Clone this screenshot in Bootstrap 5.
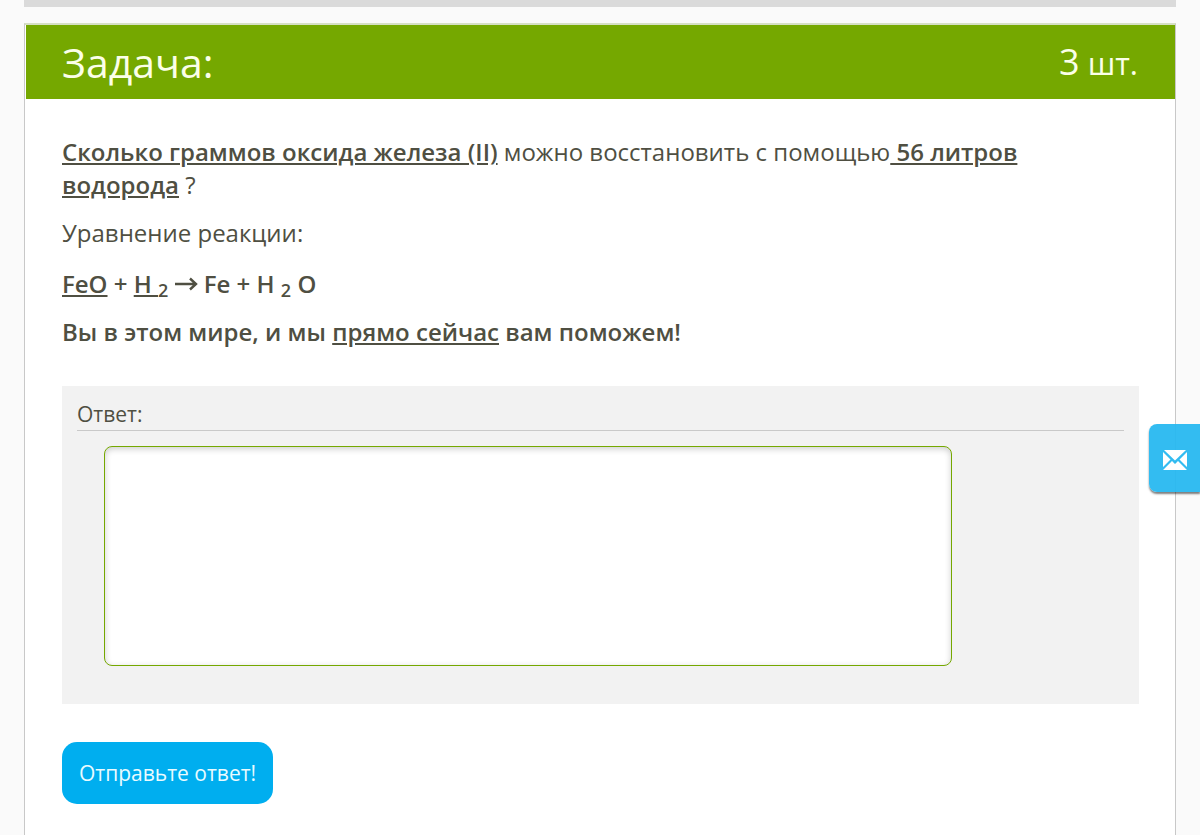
<!DOCTYPE html>
<html lang="ru">
<head>
<meta charset="utf-8">
<meta name="viewport" content="width=device-width, initial-scale=1">
<title>Задача</title>
<link href="https://cdn.jsdelivr.net/npm/bootstrap@5.3.0/dist/css/bootstrap.min.css" rel="stylesheet">
<style>
  body { background: #fafafa; color: #4f4f42; font-family: "Open Sans", sans-serif; font-size: 24px; line-height: 33px; }
  .page-wrap { padding: 0 24px; }
  .prev-block { height: 7px; background: #dadada; }
  .task { border: 1px solid #c8c8c8; border-bottom: 0; border-top: 2px solid #d5dfc4; margin-top: 16px; min-height: calc(100vh - 23px); }
  .task-head { background: #75a800; color: #fbffe8; height: 74px; margin-left: 1px; padding: 0 37px 0 36px; }
  .task-title { font-size: 41px; line-height: 48px; font-weight: 400; }
  .task-count { font-size: 31px; line-height: 48px; }
  .task-count span { font-size: 36px; }
  .task-body { padding: 36px 36px 31px 37px; }
  .task-text p { margin-bottom: 15px; }
  .task-text .formula { padding-top: 3px; }
  .task-text b { font-weight: 600; }
  .task-text sub { font-size: 18px; bottom: -4px; }
  .arrow { width: 23px; height: 14px; vertical-align: 2px; }
  .answer { background: #f2f2f2; padding: 14px 15px 38px; margin-top: 38px; }
  .answer-label { font-size: 21px; line-height: 29px; padding-bottom: 1px; border-bottom: 1px solid #c9c9c9; }
  .answer-box { width: 81%; height: 220px; margin: 15px 0 0 27px; border: 1px solid #75a800; border-radius: 8px; box-shadow: inset 0 2px 6px rgba(0,0,0,.2); resize: none; }
  .answer-box:focus { border-color: #75a800; }
  .send { background: #00aeef; color: #e9fbff; font-size: 21px; line-height: 30px; border-radius: 15px; padding: 16px 17px; margin-top: 38px; }
  .mail-tab { top: 424px; width: 51px; height: 68px; background: rgba(38,184,240,.94); border-radius: 8px 0 0 8px; box-shadow: 0 2px 2px rgba(0,0,0,.5); }
</style>
</head>
<body>
<div class="page-wrap">
  <div class="prev-block"></div>
  <main class="task bg-white">
    <header class="task-head d-flex justify-content-between align-items-center">
      <h1 class="task-title m-0">Задача:</h1>
      <div class="task-count"><span>3</span> шт.</div>
    </header>
    <form class="task-body">
      <div class="task-text">
        <p><b><u>Сколько граммов оксида железа (II)</u></b> можно восстановить с помощью<b><u> 56 литров водорода</u></b> ?</p>
        <p>Уравнение реакции:</p>
        <p class="formula"><b><u>FeO</u> + <u>H <sub>2</sub></u> <svg class="arrow" viewBox="0 0 23 14" role="img" aria-label="→"><path d="M0 7H21M15 1.500L21 7L15 12.500" fill="none" stroke="currentColor" stroke-width="2.400"/></svg> Fe + H <sub>2</sub> O</b></p>
        <p><b>Вы в этом мире, и мы <u>прямо сейчас</u> вам поможем!</b></p>
      </div>
      <div class="answer">
        <label class="answer-label d-block" for="answer">Ответ:</label>
        <textarea id="answer" class="answer-box form-control"></textarea>
      </div>
      <button type="button" class="send btn border-0">Отправьте ответ!</button>
    </form>
  </main>
</div>
<button type="button" class="mail-tab position-fixed end-0 border-0 p-0 d-flex align-items-center justify-content-center" aria-label="Написать нам">
  <svg class="mt-1" width="24" height="20" viewBox="0 0 24 20" fill="#fff"><path d="M1 0H23L12 10.500zM0 2L7.500 9.500L0 17zM24 2L16.500 9.500L24 17zM9 11L12 14L15 11L24 20H0z"/></svg>
</button>
<script src="https://cdn.jsdelivr.net/npm/bootstrap@5.3.0/dist/js/bootstrap.bundle.min.js"></script>
</body>
</html>
